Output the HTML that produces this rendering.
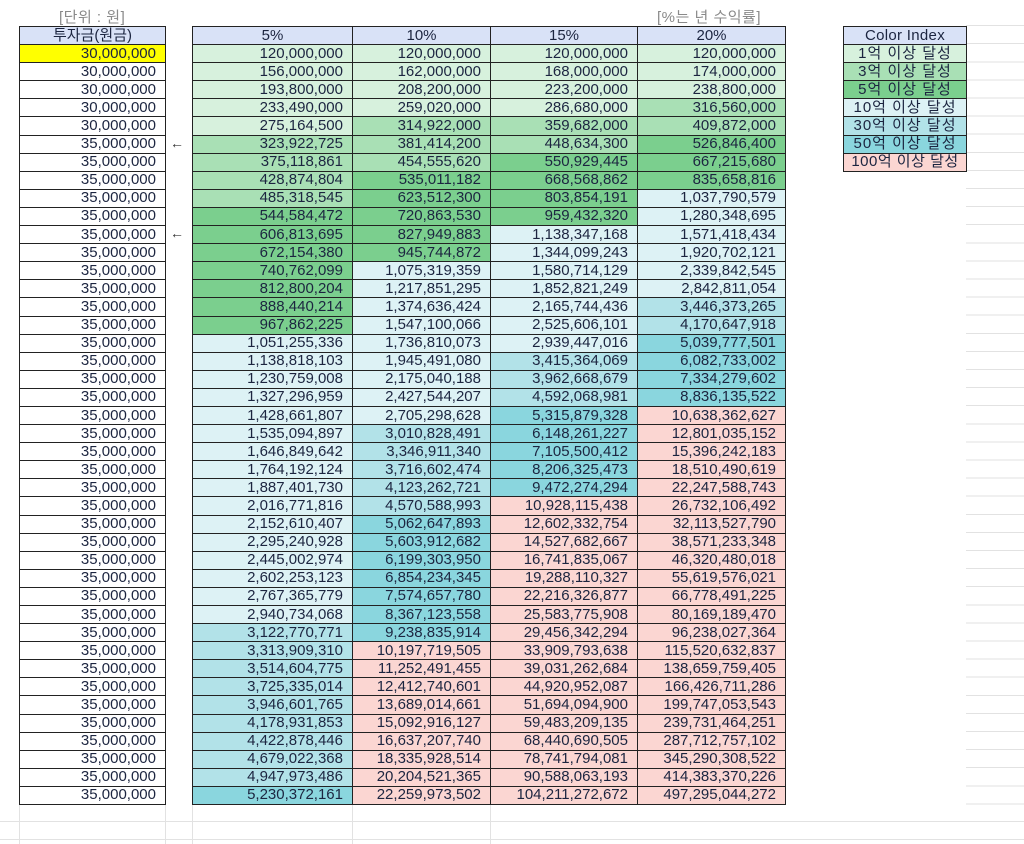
<!DOCTYPE html>
<html><head><meta charset="utf-8">
<style>
html,body{margin:0;padding:0;background:#fff;width:1024px;height:844px;overflow:hidden;position:relative;font-family:"Liberation Sans","Noto Sans CJK KR",sans-serif;color:#1c2540;}
.grid{position:absolute;background-image:repeating-linear-gradient(to bottom,transparent 0,transparent 17.1px,#e2e2e2 17.1px,#e2e2e2 18.1px);}
table{position:absolute;border-collapse:collapse;table-layout:fixed;font-size:15px;}
td{border:1px solid #222;height:17.1px;padding:0 9px 0 0;line-height:16px;text-align:right;white-space:nowrap;overflow:hidden;}
td.h{background:#d9e2f7;text-align:center;padding:0;}
.lbl{position:absolute;color:#8a8a8a;font-size:15px;letter-spacing:0.5px;}
.arr{position:absolute;left:170px;font-size:14px;color:#333;}
.c1{background:#d7f1dd}.c3{background:#a9e0b5}.c5{background:#7bcf8e}.c10{background:#ddf2f5}.c30{background:#b2e2e8}.c50{background:#8ad6de}.c100{background:#fbd6d2}
.ci td{text-align:center;padding:0;letter-spacing:1px;}
</style></head><body>
<div class="grid" style="left:966px;top:8px;width:58px;height:800px"></div>
<div class="grid" style="left:0;top:804px;width:1024px;height:40px"></div>
<div style="position:absolute;left:19px;top:804px;width:1px;height:40px;background:#e2e2e2"></div>
<div style="position:absolute;left:165px;top:804px;width:1px;height:40px;background:#e2e2e2"></div>
<div style="position:absolute;left:192px;top:804px;width:1px;height:40px;background:#e2e2e2"></div>
<div style="position:absolute;left:352px;top:804px;width:1px;height:40px;background:#e2e2e2"></div>
<div style="position:absolute;left:490px;top:804px;width:1px;height:40px;background:#e2e2e2"></div>
<div class="lbl" style="left:59px;top:6px">[단위 : 원]</div>
<div class="lbl" style="left:657px;top:6px">[%는 년 수익률]</div>
<div class="arr" style="top:135px">←</div>
<div class="arr" style="top:225px">←</div>
<table id="ta" style="left:19px;top:26px;width:147px"><tr><td class="h">투자금(원금)</td></tr></table>
<table id="tb" style="left:192px;top:26px;width:593px"><colgroup><col style="width:160px"><col style="width:138px"><col style="width:147px"><col style="width:148px"></colgroup>
<tr><td class="h">5%</td><td class="h">10%</td><td class="h">15%</td><td class="h">20%</td></tr></table>
<table class="ci" style="left:843px;top:26px;width:124px">
<tr><td class="h" style="letter-spacing:0.3px">Color Index</td></tr>
<tr><td class="c1">1억 이상 달성</td></tr>
<tr><td class="c3">3억 이상 달성</td></tr>
<tr><td class="c5">5억 이상 달성</td></tr>
<tr><td class="c10">10억 이상 달성</td></tr>
<tr><td class="c30">30억 이상 달성</td></tr>
<tr><td class="c50">50억 이상 달성</td></tr>
<tr><td class="c100" style="letter-spacing:0.5px">100억 이상 달성</td></tr>
</table>
<div id="src" style="display:none">
120,000,000|120,000,000|120,000,000|120,000,000
156,000,000|162,000,000|168,000,000|174,000,000
193,800,000|208,200,000|223,200,000|238,800,000
233,490,000|259,020,000|286,680,000|316,560,000
275,164,500|314,922,000|359,682,000|409,872,000
323,922,725|381,414,200|448,634,300|526,846,400
375,118,861|454,555,620|550,929,445|667,215,680
428,874,804|535,011,182|668,568,862|835,658,816
485,318,545|623,512,300|803,854,191|1,037,790,579
544,584,472|720,863,530|959,432,320|1,280,348,695
606,813,695|827,949,883|1,138,347,168|1,571,418,434
672,154,380|945,744,872|1,344,099,243|1,920,702,121
740,762,099|1,075,319,359|1,580,714,129|2,339,842,545
812,800,204|1,217,851,295|1,852,821,249|2,842,811,054
888,440,214|1,374,636,424|2,165,744,436|3,446,373,265
967,862,225|1,547,100,066|2,525,606,101|4,170,647,918
1,051,255,336|1,736,810,073|2,939,447,016|5,039,777,501
1,138,818,103|1,945,491,080|3,415,364,069|6,082,733,002
1,230,759,008|2,175,040,188|3,962,668,679|7,334,279,602
1,327,296,959|2,427,544,207|4,592,068,981|8,836,135,522
1,428,661,807|2,705,298,628|5,315,879,328|10,638,362,627
1,535,094,897|3,010,828,491|6,148,261,227|12,801,035,152
1,646,849,642|3,346,911,340|7,105,500,412|15,396,242,183
1,764,192,124|3,716,602,474|8,206,325,473|18,510,490,619
1,887,401,730|4,123,262,721|9,472,274,294|22,247,588,743
2,016,771,816|4,570,588,993|10,928,115,438|26,732,106,492
2,152,610,407|5,062,647,893|12,602,332,754|32,113,527,790
2,295,240,928|5,603,912,682|14,527,682,667|38,571,233,348
2,445,002,974|6,199,303,950|16,741,835,067|46,320,480,018
2,602,253,123|6,854,234,345|19,288,110,327|55,619,576,021
2,767,365,779|7,574,657,780|22,216,326,877|66,778,491,225
2,940,734,068|8,367,123,558|25,583,775,908|80,169,189,470
3,122,770,771|9,238,835,914|29,456,342,294|96,238,027,364
3,313,909,310|10,197,719,505|33,909,793,638|115,520,632,837
3,514,604,775|11,252,491,455|39,031,262,684|138,659,759,405
3,725,335,014|12,412,740,601|44,920,952,087|166,426,711,286
3,946,601,765|13,689,014,661|51,694,094,900|199,747,053,543
4,178,931,853|15,092,916,127|59,483,209,135|239,731,464,251
4,422,878,446|16,637,207,740|68,440,690,505|287,712,757,102
4,679,022,368|18,335,928,514|78,741,794,081|345,290,308,522
4,947,973,486|20,204,521,365|90,588,063,193|414,383,370,226
5,230,372,161|22,259,973,502|104,211,272,672|497,295,044,272
</div>
<script>
var lines=document.getElementById('src').textContent.trim().split('\n');
var ta=document.getElementById('ta'),tb=document.getElementById('tb');
function cls(s){var v=parseInt(s.replace(/,/g,''),10)/1e8;
if(v>=100)return'c100';if(v>=50)return'c50';if(v>=30)return'c30';if(v>=10)return'c10';if(v>=5)return'c5';if(v>=3)return'c3';return'c1';}
lines.forEach(function(l,i){
 var tr=document.createElement('tr');var td=document.createElement('td');
 td.textContent=i<5?'30,000,000':'35,000,000';if(i==0)td.style.background='#ffff00';
 tr.appendChild(td);ta.appendChild(tr);
 var tr2=document.createElement('tr');
 l.trim().split('|').forEach(function(v){var d=document.createElement('td');d.textContent=v;d.className=cls(v);tr2.appendChild(d);});
 tb.appendChild(tr2);
});
</script>
</body></html>
